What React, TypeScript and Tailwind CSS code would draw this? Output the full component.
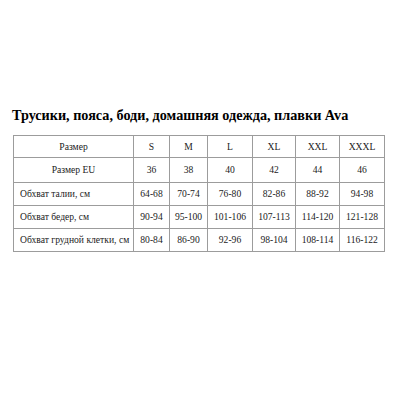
const sizes = ["S", "M", "L", "XL", "XXL", "XXXL"];
const widths = ["w-[36px]", "w-[38px]", "w-[45px]", "w-[43px]", "w-[44px]", "w-[45px]"];

const rows: { label: string; values: string[]; center?: boolean }[] = [
  { label: "Размер EU", values: ["36", "38", "40", "42", "44", "46"], center: true },
  { label: "Обхват талии, см", values: ["64-68", "70-74", "76-80", "82-86", "88-92", "94-98"] },
  { label: "Обхват бедер, см", values: ["90-94", "95-100", "101-106", "107-113", "114-120", "121-128"] },
  { label: "Обхват грудной клетки, см", values: ["80-84", "86-90", "92-96", "98-104", "108-114", "116-122"] },
];

const font = "font-['Liberation_Serif','Times_New_Roman',serif]";
const cell = `border border-[#9c9c9c] p-0 text-center whitespace-nowrap ${font} text-[9.6px]`;
const labelCell = `border border-[#9c9c9c] p-0 pl-[6px] text-left whitespace-nowrap ${font} text-[9.6px]`;

export default function App() {
  return (
    <div className={`w-[400px] h-[400px] bg-white pl-[12px] pt-[106px] ${font}`}>
      <h1 className="text-[14.2px] font-bold leading-[18px] text-black">
        Трусики, пояса, боди, домашняя одежда, плавки Ava
      </h1>
      <table className={`mt-[11px] ml-[1px] border-collapse ${font} text-[9.6px] leading-[12px] text-[#222] table-fixed w-[371px]`}>
        <thead>
          <tr className="h-[22px]">
            <td className={`${cell} w-[120px]`}>Размер</td>
            {sizes.map((s, i) => (
              <td key={s} className={`${cell} ${widths[i]}`}>
                {s}
              </td>
            ))}
          </tr>
        </thead>
        <tbody>
          {rows.map((r, ri) => (
            <tr key={r.label} className={ri === 0 ? "h-[25px]" : "h-[23px]"}>
              <td className={r.center ? cell : labelCell}>{r.label}</td>
              {r.values.map((v, i) => (
                <td key={i} className={cell}>
                  {v}
                </td>
              ))}
            </tr>
          ))}
        </tbody>
      </table>
    </div>
  );
}
